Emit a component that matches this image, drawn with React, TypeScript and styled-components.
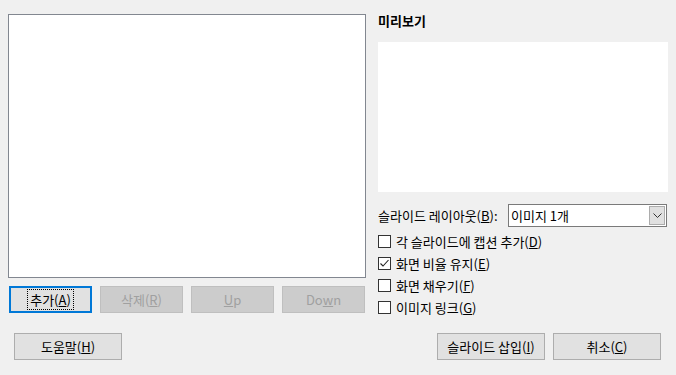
import React from "react";
import styled, { createGlobalStyle } from "styled-components";

const Global = createGlobalStyle`
  html, body { margin: 0; padding: 0; background: #f0f0f0; }
  body {
    font-family: "Noto Sans CJK KR", "Noto Sans", sans-serif;
    font-size: 13px;
    color: #000;
  }
`;

const Page = styled.div`
  width: 676px;
  height: 375px;
  box-sizing: border-box;
  padding-top: 14px;
  display: flex;
  flex-direction: column;
  background: #f0f0f0;
  overflow: hidden;
`;

const TopArea = styled.div`
  display: flex;
  gap: 12px;
  padding-left: 8px;
  height: 304px;
`;

const LeftCol = styled.div`
  width: 358px;
  display: flex;
  flex-direction: column;
`;

const ListBox = styled.div`
  height: 264px;
  box-sizing: border-box;
  background: #fff;
  border: 1px solid #828790;
`;

const ButtonRow = styled.div`
  display: flex;
  gap: 8px;
  margin-top: 8px;
  padding-left: 1px;
`;

const Btn = styled.button<{ $w?: number; $focused?: boolean }>`
  width: ${(p) => p.$w ?? 83}px;
  height: 27px;
  box-sizing: border-box;
  font-family: inherit;
  font-size: 13px;
  line-height: 15px;
  color: #000;
  background: #e1e1e1;
  border: ${(p) => (p.$focused ? "2px solid #0078d7" : "1px solid #adadad")};
  padding: 0;
  display: flex;
  align-items: center;
  justify-content: center;
  &:disabled {
    background: #cccccc;
    border-color: #bfbfbf;
    color: #a0a0a0;
  }
`;

const Focus = styled.span`
  outline: 1px dotted #000;
  outline-offset: 1px;
  padding: 1px 1px;
`;

const RightCol = styled.div`
  width: 290px;
  display: flex;
  flex-direction: column;
`;

const Title = styled.div`
  font-weight: bold;
  height: 28px;
  line-height: 16px;
  margin-top: -1px;
  margin-bottom: 1px;
`;

const Preview = styled.div`
  height: 150px;
  background: #fff;
`;

const LayoutRow = styled.div`
  display: flex;
  align-items: center;
  margin-top: 12px;
  height: 23px;
`;

const LayoutLabel = styled.span`
  width: 130px;
`;

const Select = styled.div`
  width: 159px;
  height: 23px;
  box-sizing: border-box;
  border: 1px solid #7a7a7a;
  background: #fff;
  display: flex;
  align-items: stretch;
`;

const SelectValue = styled.span`
  flex: 1;
  display: flex;
  align-items: center;
  padding-left: 2px;
`;

const SelectArrow = styled.span`
  width: 16px;
  margin: 1px;
  box-sizing: border-box;
  background: #e0e0e0;
  border: 1px solid #acacac;
  display: flex;
  align-items: center;
  justify-content: center;
`;

const Checks = styled.div`
  display: flex;
  flex-direction: column;
  margin-top: 3px;
`;

const CheckRow = styled.label`
  display: flex;
  align-items: center;
  height: 22px;
  gap: 5px;
`;

const Box = styled.span`
  width: 13px;
  height: 13px;
  box-sizing: border-box;
  border: 1px solid #333;
  background: #fff;
  display: flex;
  align-items: center;
  justify-content: center;
`;

const BottomBar = styled.div`
  display: flex;
  justify-content: space-between;
  margin-top: 15px;
  padding: 0 15px 0 14px;
`;

const RightButtons = styled.div`
  display: flex;
  gap: 8px;
`;

const checks: { label: string; key: string; checked: boolean }[] = [
  { label: "각 슬라이드에 캡션 추가", key: "D", checked: false },
  { label: "화면 비율 유지", key: "E", checked: true },
  { label: "화면 채우기", key: "F", checked: false },
  { label: "이미지 링크", key: "G", checked: false },
];

export default function App() {
  return (
    <Page>
      <Global />
      <TopArea>
        <LeftCol>
          <ListBox />
          <ButtonRow>
            <Btn $w={83} $focused>
              <Focus>
                추가(<u>A</u>)
              </Focus>
            </Btn>
            <Btn disabled>
              삭제(<u>R</u>)
            </Btn>
            <Btn disabled>
              <u>U</u>p
            </Btn>
            <Btn disabled>
              Do<u>w</u>n
            </Btn>
          </ButtonRow>
        </LeftCol>
        <RightCol>
          <Title>미리보기</Title>
          <Preview />
          <LayoutRow>
            <LayoutLabel>
              슬라이드 레이아웃(<u>B</u>):
            </LayoutLabel>
            <Select>
              <SelectValue>이미지 1개</SelectValue>
              <SelectArrow>
                <svg width="9" height="5" viewBox="0 0 9 5">
                  <path d="M0.5 0.5 L4.5 4.5 L8.5 0.5" fill="none" stroke="#333" strokeWidth="1" />
                </svg>
              </SelectArrow>
            </Select>
          </LayoutRow>
          <Checks>
            {checks.map((c) => (
              <CheckRow key={c.key}>
                <Box>
                  {c.checked && (
                    <svg width="11" height="11" viewBox="0 0 11 11">
                      <path d="M1.5 5.5 L4 8 L9.5 2" fill="none" stroke="#222" strokeWidth="1.1" />
                    </svg>
                  )}
                </Box>
                <span>
                  {c.label}(<u>{c.key}</u>)
                </span>
              </CheckRow>
            ))}
          </Checks>
        </RightCol>
      </TopArea>
      <BottomBar>
        <Btn $w={108}>
          도움말(<u>H</u>)
        </Btn>
        <RightButtons>
          <Btn $w={108}>
            슬라이드 삽입(<u>I</u>)
          </Btn>
          <Btn $w={108}>
            취소(<u>C</u>)
          </Btn>
        </RightButtons>
      </BottomBar>
    </Page>
  );
}
